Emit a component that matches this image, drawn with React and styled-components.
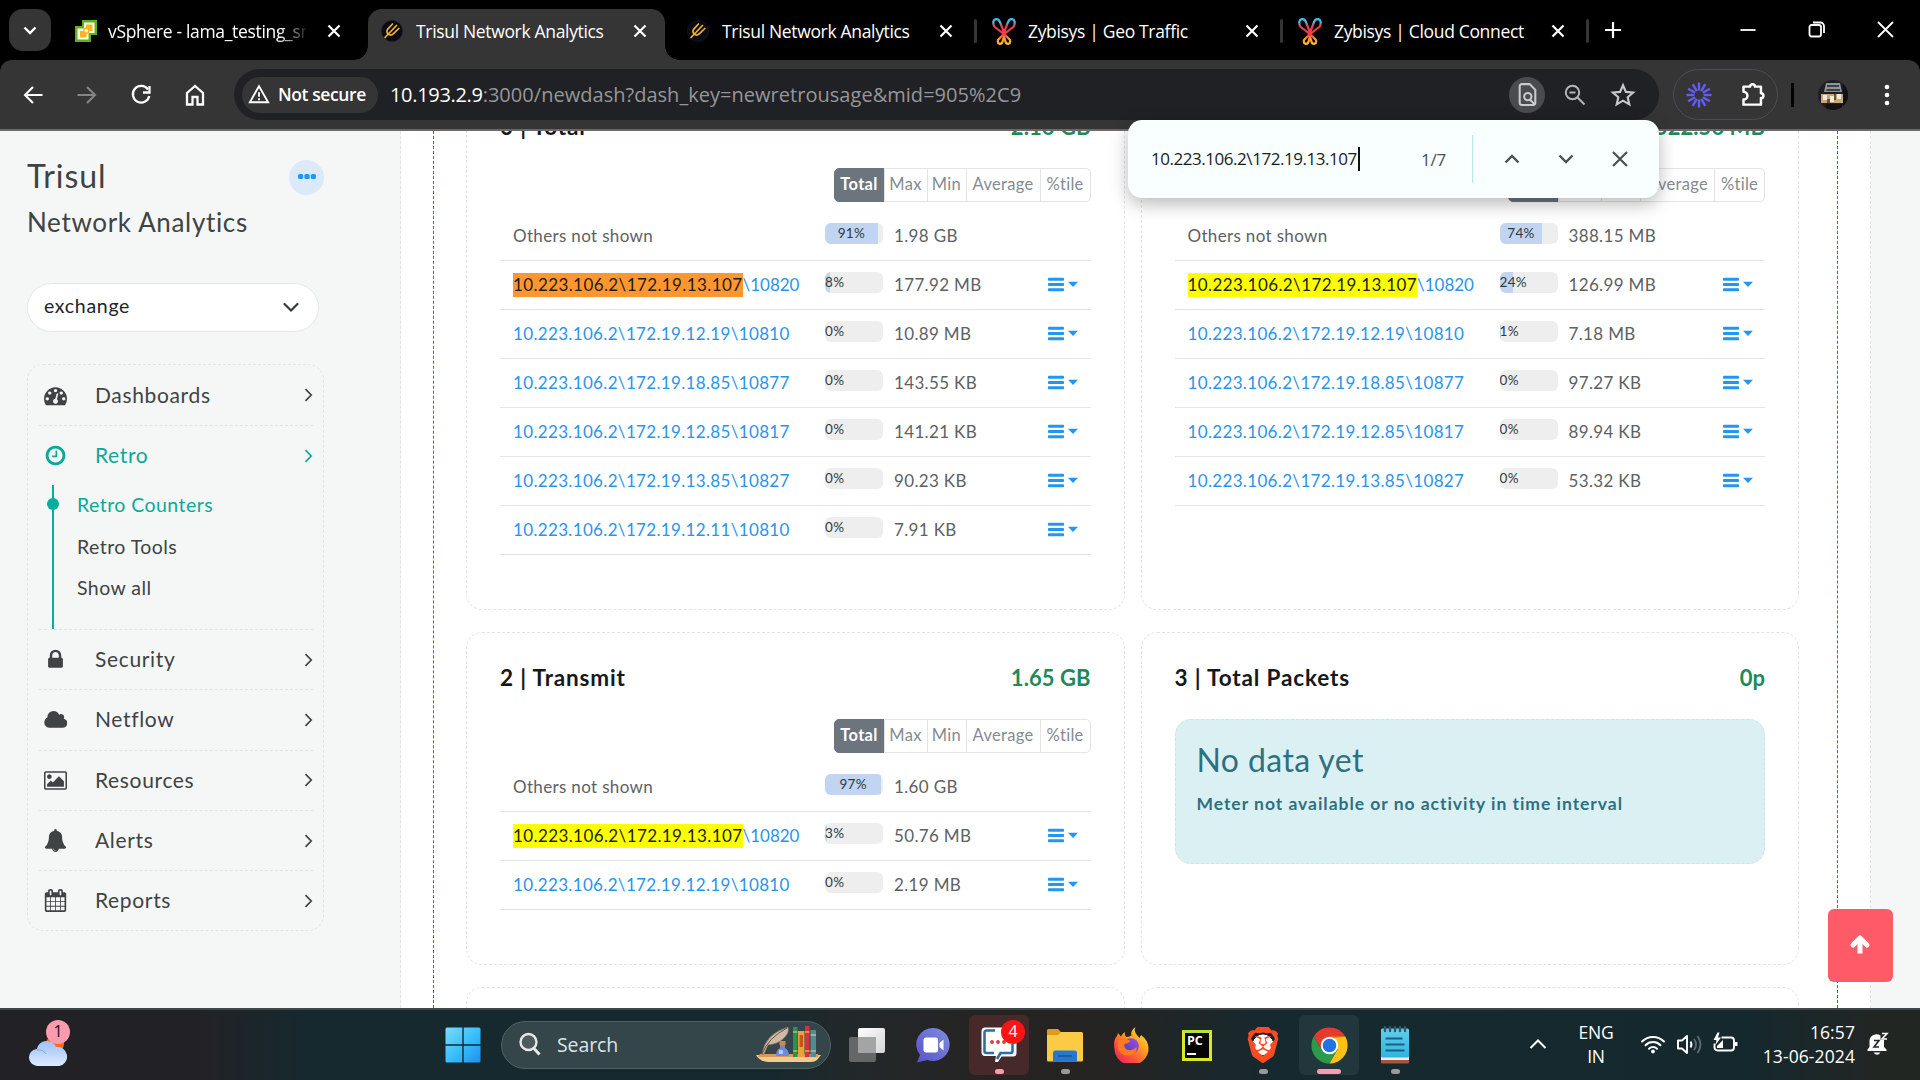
import React from "react";
import styled, { createGlobalStyle, css } from "styled-components";
import { SiBrave } from "react-icons/si";

const ui = `"Open Sans", "Noto Sans", sans-serif`;
const body = `Lato, "Open Sans", sans-serif`;

const Global = createGlobalStyle`
  * { box-sizing: border-box; }
  html, body { margin: 0; padding: 0; overflow: hidden; background: #fff; }
  svg { display: block; flex: none; }
`;

const Desktop = styled.div`
  position: relative;
  display: flex;
  flex-direction: column;
  width: 1920px;
  height: 1080px;
  overflow: hidden;
  font-family: ${body};
`;

/* ---------- browser chrome ---------- */
const TabStrip = styled.div`
  display: flex;
  align-items: flex-start;
  height: 60px;
  padding: 9px 0 0 9px;
  background: #000;
  font-family: ${ui};
`;
const TabSearch = styled.div`
  display: flex;
  align-items: center;
  justify-content: center;
  width: 42px;
  height: 42px;
  margin-right: 11px;
  border-radius: 14px;
  background: #353535;
`;
const TabCell = styled.div`
  display: flex;
  width: 306px;
  height: 51px;
`;
const TabBody = styled.div`
  position: relative;
  display: flex;
  align-items: center;
  width: 297px;
  height: 51px;
  padding: 0 17px 7px 12px;
  border-radius: 14px 14px 0 0;
  ${p => p.$active && css`
    background: #353535;
    &::before, &::after {
      content: "";
      position: absolute;
      bottom: 0;
      width: 14px;
      height: 14px;
    }
    &::before { left: -14px; background: radial-gradient(circle at 0 0, transparent 13.5px, #353535 14px); }
    &::after { right: -14px; background: radial-gradient(circle at 100% 0, transparent 13.5px, #353535 14px); }
  `}
`;
const TabTitle = styled.div`
  flex: 1;
  margin: 0 12px;
  overflow: hidden;
  white-space: nowrap;
  color: #fff;
  font-size: 17.5px;
  letter-spacing: -0.33px;
  line-height: 24px;
  ${p => p.$fade && css`
    margin-left: 10px;
    margin-right: 20px;
    mask-image: linear-gradient(90deg, #000 86%, transparent 102%);
  `}
`;
const TabRule = styled.div`
  width: 3px;
  height: 24px;
  margin: 10px 0 0 3px;
  border-radius: 2px;
  background: ${p => (p.$show ? "#353535" : "transparent")};
`;
const NewTab = styled.div`
  margin: 11px 0 0 11px;
`;
const WindowButtons = styled.div`
  display: flex;
  align-items: center;
  gap: 52px;
  margin: 12px 26px 0 auto;
`;

const ToolbarBack = styled.div`
  background: #000;
  height: 71px;
`;
const Toolbar = styled.div`
  display: flex;
  align-items: center;
  height: 71px;
  padding-left: 21px;
  border-bottom: 2px solid #6b696a;
  border-radius: 12px 12px 0 0;
  background: #353535;
  font-family: ${ui};
`;
const NavIcons = styled.div`
  display: flex;
  gap: 30px;
`;
const Omnibox = styled.div`
  display: flex;
  align-items: center;
  width: 1425px;
  height: 51px;
  margin-left: 27px;
  padding: 0 23px 0 8px;
  border-radius: 26px;
  background: #202124;
`;
const SecurityChip = styled.div`
  display: flex;
  align-items: center;
  gap: 8px;
  width: 136px;
  height: 36px;
  padding: 0 0 1px 6px;
  border-radius: 18px;
  background: #353535;
  color: #fff;
  font-size: 17.5px;
  font-weight: 600;
  letter-spacing: -0.4px;
  white-space: nowrap;
`;
const Url = styled.div`
  flex: 1;
  margin-left: 12px;
  color: #95979a;
  font-size: 20px;
  letter-spacing: 0.03px;
  white-space: nowrap;
  b { color: #fff; font-weight: 400; letter-spacing: -0.32px; }
`;
const OmniIcons = styled.div`
  display: flex;
  align-items: center;
  gap: 23px;
`;
const FindPageChip = styled.div`
  display: flex;
  align-items: center;
  justify-content: center;
  width: 36px;
  height: 36px;
  margin-right: -5px;
  border-radius: 50%;
  background: #4a4b4e;
`;
const ExtensionPill = styled.div`
  display: flex;
  align-items: center;
  justify-content: space-between;
  width: 105px;
  height: 51px;
  margin-left: 14px;
  padding: 0 11px 0 12px;
  border: 1px solid #4b4e52;
  border-radius: 26px;
`;
const ToolbarRule = styled.div`
  width: 3px;
  height: 24px;
  margin-left: 13px;
  background: #000;
`;
const Avatar = styled.div`
  margin-left: 24px;
`;
const KebabWrap = styled.div`
  margin-left: 36px;
`;

const FindBar = styled.div`
  position: absolute;
  z-index: 5;
  left: 1128px;
  top: 120px;
  display: flex;
  align-items: center;
  width: 531px;
  height: 78px;
  padding: 0 29px 0 23px;
  border-radius: 14px;
  background: #f8fffe;
  box-shadow: 0 6px 18px rgba(0, 0, 0, 0.28);
  font-family: ${ui};
`;
const FindInput = styled.div`
  padding-right: 1px;
  border-right: 2px solid #111;
  color: #1b1b1b;
  font-size: 17px;
  line-height: 24px;
  letter-spacing: -0.46px;
  white-space: nowrap;
`;
const FindCount = styled.div`
  margin-left: auto;
  color: #4a4f50;
  font-size: 17px;
  letter-spacing: -0.2px;
`;
const FindRule = styled.div`
  width: 1px;
  height: 48px;
  margin: 0 29px 0 26px;
  background: #b4e6ea;
`;
const FindButtons = styled.div`
  display: flex;
  gap: 34px;
`;

/* ---------- page ---------- */
const Page = styled.div`
  display: flex;
  height: 877px;
  overflow: hidden;
  background: #f5f7f6;
`;
const Sidebar = styled.aside`
  width: 401px;
  padding: 24px 0 0 27px;
  border-right: 1px dashed #e2e4e3;
  background: #f5f7f6;
  color: #404344;
`;
const BrandRow = styled.div`
  display: flex;
  align-items: center;
  justify-content: space-between;
  width: 297px;
  height: 40px;
  font-size: 32px;
  letter-spacing: 0.9px;
`;
const MoreButton = styled.div`
  display: flex;
  align-items: center;
  justify-content: center;
  width: 35px;
  height: 35px;
  margin-top: 5px;
  padding-bottom: 2px;
  border-radius: 50%;
  background: #dce9f8;
`;
const BrandSub = styled.div`
  margin-top: 9px;
  font-size: 26px;
  line-height: 36px;
  letter-spacing: 0.66px;
`;
const Select = styled.div`
  display: flex;
  align-items: center;
  justify-content: space-between;
  width: 292px;
  height: 49px;
  margin-top: 43px;
  padding: 0 19px 4px 16px;
  border: 1px solid #e4e6e5;
  border-radius: 25px;
  background: #fff;
  color: #212529;
  font-size: 19.5px;
  letter-spacing: 0.7px;
`;
const Menu = styled.nav`
  width: 297px;
  height: 567px;
  margin-top: 32px;
  padding: 0 10px 0 11px;
  border: 1px dashed #e2e4e3;
  border-radius: 16px;
`;
const Group = styled.div`
  border-bottom: ${p => (p.$last ? "0" : "1px dashed #e2e4e3")};
`;
const MenuItem = styled.div`
  display: flex;
  align-items: center;
  height: ${p => (p.$open ? 59 : p.$first ? 60 : 59.3)}px;
  padding-left: 5px;
  color: ${p => (p.$open ? "#09a99a" : "#404344")};
  font-size: 21px;
  letter-spacing: 0.65px;
`;
const MenuLabel = styled.span`
  flex: 1;
  margin-left: 28px;
  padding-bottom: 2px;
`;
const SubList = styled.div`
  height: 144px;
  margin-left: 13px;
  padding-left: 23px;
  border-left: 2px solid #05ad9d;
  font-size: 19.5px;
  letter-spacing: 0.45px;
`;
const SubItem = styled.div`
  position: relative;
  top: -1px;
  line-height: 41.5px;
  color: ${p => (p.$active ? "#09a99a" : "#404344")};
  ${p => p.$active && css`
    &::before {
      content: "";
      position: absolute;
      left: -30px;
      top: 14px;
      width: 12px;
      height: 12px;
      border-radius: 50%;
      background: #05ad9d;
    }
  `}
`;

const Main = styled.main`
  width: 1470px;
  padding: 0 32px;
  border-right: 1px dashed #e2e4e3;
  background: #fff;
`;
const DropZone = styled.div`
  display: flow-root;
  height: 877px;
  padding: 0 38px 0 32px;
  border-left: 1px dashed #1a6fe8;
  border-right: 1px dashed #1a6fe8;
`;
const Grid = styled.div`
  display: grid;
  grid-template-columns: 1fr 1fr;
  grid-template-rows: 529px 333px 200px;
  gap: 22px 16px;
  margin-top: -50px;
`;
const Card = styled.section`
  padding: 30px 33px 0;
  border: 1px dashed #e2e4e3;
  border-radius: 16px;
`;
const CardHead = styled.div`
  display: flex;
  justify-content: space-between;
  height: 30px;
  margin-bottom: 26px;
  color: #16191c;
  font-size: 22.5px;
  font-weight: 700;
  line-height: 30px;
  letter-spacing: 0.85px;
`;
const CardValue = styled.span`
  color: #1e8a59;
  font-size: 22px;
  letter-spacing: 0.05px;
`;
const Segments = styled.div`
  display: flex;
  width: max-content;
  height: 34px;
  margin: 0 0 10px auto;
`;
const Segment = styled.div`
  width: ${p => p.$w}px;
  margin-left: ${p => (p.$on ? 0 : -1)}px;
  border: 1px solid ${p => (p.$on ? "#6c757d" : "#e6e4e0")};
  background: ${p => (p.$on ? "#6c757d" : "transparent")};
  color: ${p => (p.$on ? "#fff" : "#858b90")};
  font-size: 16.5px;
  font-weight: ${p => (p.$on ? 700 : 400)};
  line-height: 31px;
  letter-spacing: 0.3px;
  text-align: center;
  white-space: nowrap;
  &:first-child { border-radius: 5px 0 0 5px; }
  &:last-child { border-radius: 0 5px 5px 0; }
`;
const Row = styled.div`
  display: grid;
  grid-template-columns: 312px 58px 165px 1fr;
  align-items: center;
  height: 49px;
  padding-left: 13px;
  border-bottom: 1px solid #e6e5e1;
  color: #5d6163;
  font-size: 17px;
  letter-spacing: 0.34px;
  white-space: nowrap;
`;
const Key = styled.span`
  padding-bottom: 1px;
  color: ${p => (p.$link ? "#2a94ea" : "inherit")};
  letter-spacing: ${p => (p.$marked ? 0 : 0.34)}px;
`;
const Hit = styled.mark`
  display: inline-block;
  height: 24px;
  line-height: 24px;
  background: ${p => (p.$current ? "#ff9632" : "#ffff00")};
  color: #1d1f10;
  letter-spacing: 0.4px;
`;
const Track = styled.div`
  height: 21px;
  margin-bottom: 5px;
  overflow: hidden;
  border-radius: 6px;
  background: #eeeeee;
`;
const Fill = styled.div`
  display: flex;
  justify-content: ${p => (p.$wide ? "center" : "flex-start")};
  height: 21px;
  background: #c1d4f1;
  color: #2f3a40;
  font-size: 13.5px;
  line-height: 20px;
  letter-spacing: 0.3px;
`;
const Amount = styled.span`
  padding: 0 0 1px 11px;
`;
const Alert = styled.div`
  height: 145px;
  padding: 21px 21px 0;
  border: 1px dashed #c9e6ea;
  border-radius: 16px;
  background: #dbf0f3;
  color: #2f7080;
`;
const AlertTitle = styled.div`
  font-size: 32px;
  line-height: 38px;
  letter-spacing: 0.4px;
`;
const AlertText = styled.div`
  margin-top: 13px;
  font-size: 17.5px;
  font-weight: 700;
  line-height: 24px;
  letter-spacing: 0.97px;
  white-space: nowrap;
`;
const ScrollTop = styled.div`
  position: absolute;
  left: 1828px;
  top: 909px;
  display: flex;
  align-items: center;
  justify-content: center;
  width: 65px;
  height: 73px;
  padding: 0 1px 2px 0;
  border-radius: 6px;
  background: #ff5a68;
`;

/* ---------- taskbar ---------- */
const Taskbar = styled.footer`
  display: flex;
  align-items: center;
  height: 72px;
  border-top: 2px solid #3f4748;
  background: linear-gradient(90deg, #222226 0, #222226 200px, #15292e 310px, #15292e 760px, #22282a 850px, #262322 1000px, #242423 1120px, #16292e 1270px, #15282d 1750px, #222623 1880px);
  color: #fff;
  font-family: ${ui};
`;
const Weather = styled.div`
  position: relative;
  width: 404px;
  margin-left: 29px;
`;
const Badge = styled.div`
  position: absolute;
  left: ${p => p.$x}px;
  top: ${p => p.$y}px;
  width: 24px;
  height: 24px;
  border-radius: 50%;
  background: ${p => p.$bg};
  color: ${p => p.$fg};
  font-size: 16px;
  line-height: 23px;
  text-align: center;
`;
const TileBar = styled.div`
  display: flex;
  gap: 6px;
`;
const Tile = styled.div`
  position: relative;
  display: flex;
  align-items: center;
  justify-content: center;
  width: 60px;
  height: 60px;
  border-radius: 6px;
  background: ${p => p.$bg || "transparent"};
  ${p => p.$mark && css`
    &::after {
      content: "";
      position: absolute;
      bottom: 1px;
      left: ${(60 - p.$markW) / 2}px;
      width: ${p.$markW}px;
      height: 5px;
      border-radius: 3px;
      background: ${p.$mark};
    }
  `}
`;
const SearchBox = styled.div`
  display: flex;
  align-items: center;
  width: 330px;
  height: 48px;
  margin: 0 6px 0 8px;
  padding: 0 8px 2px 16px;
  border: 1px solid #53605f;
  border-radius: 24px;
  background: #35464a;
  color: #dfe3e4;
  font-size: 19.5px;
  letter-spacing: -0.1px;
`;
const SearchText = styled.span`
  flex: 1;
  margin-left: 15px;
`;
const Tray = styled.div`
  display: flex;
  align-items: center;
  margin-left: auto;
  padding: 0 31px 2px 0;
  font-size: 17.5px;
  line-height: 24px;
`;
const Lang = styled.div`
  width: 38px;
  margin: 0 25px 0 30px;
  text-align: center;
  letter-spacing: -0.2px;
`;
const Status = styled.div`
  display: flex;
  align-items: center;
  gap: 10px;
`;
const Clock = styled.div`
  width: 95px;
  margin: 0 12px 0 22px;
  text-align: right;
  letter-spacing: 0.1px;
  white-space: nowrap;
`;

/* ---------- icons ---------- */
const Line = ({ s = 24, w = 2, c = "#fff", vb = 24, children, ...r }) => (
  <svg width={s} height={s} viewBox={`0 0 ${vb} ${vb}`} fill="none" stroke={c} strokeWidth={w} {...r}>{children}</svg>
);
const Cross = ({ s = 16, c = "#fff", w = 2.2 }) => (
  <Line s={s} vb={16} c={c} w={w}><path d="M2.5 2.5l11 11M13.5 2.5l-11 11" /></Line>
);
const VSphereIcon = () => (
  <svg width="24" height="24" viewBox="0 0 24 24">
    <path d="M8 1h15v15h-6v7H1V7h7z" fill="#5bb318" />
    <path d="M10 3.500h10.500v10.500h-6v6.500H3.500V9.500H10z" fill="#fff" />
    <path d="M12 5.500h6.500v6.500H12zM6 12h6.500v6.500H6z" fill="#f9b418" />
    <path d="M10 9.500h4.500v4.500H10z" fill="#fff" stroke="#f9b418" strokeWidth="1.500" />
  </svg>
);
const TrisulIcon = () => (
  <svg width="24" height="24" viewBox="0 0 24 24">
    <circle cx="12" cy="12" r="10.500" fill="#0a0a14" stroke="#1c1c2c" strokeWidth=".6" />
    <g fill="none" stroke="#f0b429" strokeWidth="1.700" strokeLinecap="round">
      <path d="M5 18.500L16.500 6.500" />
      <path d="M12.500 5L8 9.800q-2.200 3 .2 5.400 2.600 2 5.300-.6L18.800 9.500" />
    </g>
  </svg>
);
const ZybisysIcon = () => (
  <svg width="24" height="27" viewBox="0 0 24 27" fill="none" strokeWidth="2.200" strokeLinejoin="round">
    <defs>
      <linearGradient id="zy" x1="0" y1="1" x2="0" y2="26" gradientUnits="userSpaceOnUse">
        <stop offset="0" stopColor="#35c3ea" /><stop offset=".14" stopColor="#5ab4dc" />
        <stop offset=".26" stopColor="#ef3f4e" /><stop offset=".64" stopColor="#ef3f4e" />
        <stop offset=".76" stopColor="#f9981c" /><stop offset="1" stopColor="#fbc02d" />
      </linearGradient>
    </defs>
    <g stroke="url(#zy)">
      <path d="M13 17L2.200 8.500Q-.2 2 3.800 1.200 7.200 .8 8.500 5.500z" />
      <path d="M11 17L21.800 8.500Q24.200 2 20.200 1.200 16.800 .8 15.500 5.500z" />
      <path d="M13 14.500L6 22q-.8 3 1.500 3.800 2.500 .2 3-2z" />
      <path d="M11 14.500L18 22q.8 3-1.500 3.800-2.500 .2-3-2z" />
    </g>
  </svg>
);
const LoomIcon = () => (
  <svg width="26" height="26" viewBox="-13 -13 26 26" stroke="#625df5" strokeWidth="2.400">
    {Array.from({ length: 12 }, (_, i) => <path key={i} d="M0-4.500V-12.500" transform={`rotate(${i * 30})`} />)}
  </svg>
);
const AvatarIcon = () => (
  <svg width="30" height="30" viewBox="0 0 30 30">
    <clipPath id="av"><circle cx="15" cy="15" r="15" /></clipPath>
    <g clipPath="url(#av)">
      <path fill="#1d1f24" d="M0 0h30v30H0z" />
      <path fill="#8f9497" d="M8 3h14l2 9H6z" />
      <path fill="#3a4248" d="M9 5h12v2H9zM9 9h13v2H8z" />
      <path fill="#c9a57c" d="M3 14h22v9H3z" />
      <path fill="#efeadf" d="M5 15h4v5H5zM12 16h4v6h-4zM19 14h4v5h-4z" />
      <path fill="#6f4f35" d="M9 19h3v4H9zM16 14h2v6h-2z" />
      <path fill="#101114" d="M25 0h5v30h-5zM8 24h16v6H8z" />
    </g>
  </svg>
);

const glyphs = {
  gauge: ["0 0 1792 1792", "M384 1152q0-53-37.5-90.5t-90.5-37.5-90.5 37.5-37.5 90.5 37.5 90.5 90.5 37.5 90.5-37.5 37.5-90.5zm192-448q0-53-37.5-90.5t-90.5-37.5-90.5 37.5-37.5 90.5 37.5 90.5 90.5 37.5 90.5-37.5 37.5-90.5zm428 481l101-382q6-26-7.5-48.5t-38.5-29.5-48 6.5-30 39.5l-101 382q-60 5-107 43.5t-63 98.5q-20 77 20 146t117 89 146-20 89-117q16-60-6-117t-72-91zm660-33q0-53-37.5-90.5t-90.5-37.5-90.5 37.5-37.5 90.5 37.5 90.5 90.5 37.5 90.5-37.5 37.5-90.5zm-640-640q0-53-37.5-90.5t-90.5-37.5-90.5 37.5-37.5 90.5 37.5 90.5 90.5 37.5 90.5-37.5 37.5-90.5zm448 192q0-53-37.5-90.5t-90.5-37.5-90.5 37.5-37.5 90.5 37.5 90.5 90.5 37.5 90.5-37.5 37.5-90.5zm320 448q0 261-141 483-19 29-54 29h-1402q-35 0-54-29-141-221-141-483 0-182 71-348t191-286 286-191 348-71 348 71 286 191 191 286 71 348z"],
  clock: ["0 0 1792 1792", "M1024 544v448q0 14-9 23t-23 9h-320q-14 0-23-9t-9-23v-64q0-14 9-23t23-9h224v-352q0-14 9-23t23-9h64q14 0 23 9t9 23zm416 352q0-148-73-273t-198-198-273-73-273 73-198 198-73 273 73 273 198 198 273 73 273-73 198-198 73-273zm224 0q0 209-103 385.5t-279.5 279.5-385.5 103-385.5-103-279.5-279.5-103-385.5 103-385.5 279.5-279.5 385.5-103 385.5 103 279.5 279.5 103 385.5z"],
  lock: ["0 0 1792 1792", "M640 768h512v-192q0-106-75-181t-181-75-181 75-75 181v192zm832 96v576q0 40-28 68t-68 28h-960q-40 0-68-28t-28-68v-576q0-40 28-68t68-28h32v-192q0-184 132-316t316-132 316 132 132 316v192h32q40 0 68 28t28 68z"],
  cloud: ["40 0 1920 1680", "M1984 1152q0 159-112.5 271.5t-271.5 112.5h-1088q-185 0-316.500-131.500t-131.500-316.500q0-132 71-241.500t187-163.500q-2-28-2-43 0-212 150-362t362-150q158 0 286.500 88t187.500 230q70-62 166-62 106 0 181 75t75 181q0 75-41 138 129 30 213 134.500t84 239.500z"],
  image: ["-64 0 1920 1792", "M576 576q0 80-56 136t-136 56-136-56-56-136 56-136 136-56 136 56 56 136zm1024 384v448h-1408v-192l320-320 160 160 512-512zm96-704h-1600q-13 0-22.500 9.500t-9.500 22.500v1216q0 13 9.500 22.500t22.500 9.500h1600q13 0 22.500-9.500t9.500-22.500v-1216q0-13-9.500-22.500t-22.500-9.500zm160 32v1216q0 66-47 113t-113 47h-1600q-66 0-113-47t-47-113v-1216q0-66 47-113t113-47h1600q66 0 113 47t47 113z"],
  bell: ["0 0 1792 1792", "M912 1696q0-16-16-16-59 0-101.500-42.500t-42.500-101.500q0-16-16-16t-16 16q0 73 51.500 124.500t124.500 51.500q16 0 16-16zm816-288q0 52-38 90t-90 38h-448q0 106-75 181t-181 75-181-75-75-181h-448q-52 0-90-38t-38-90q50-42 91-88t85-119.500 74.500-158.500 50-206 19.500-260q0-152 117-282.500t307-158.500q-8-19-8-39 0-40 28-68t68-28 68 28 28 68q0 20-8 39 190 28 307 158.500t117 282.500q0 139 19.500 260t50 206 74.500 158.500 85 119.500 91 88z"],
  calendar: ["0 0 1792 1792", "M192 1664h288v-288h-288v288zm352 0h320v-288h-320v288zm-352-352h288v-320h-288v320zm352 0h320v-320h-320v320zm-352-384h288v-288h-288v288zm736 736h320v-288h-320v288zm-384-736h320v-288h-320v288zm768 736h288v-288h-288v288zm-384-352h320v-320h-320v320zm-352-864v-288q0-13-9.500-22.500t-22.500-9.500h-64q-13 0-22.500 9.500t-9.500 22.500v288q0 13 9.500 22.500t22.500 9.500h64q13 0 22.500-9.500t9.500-22.500zm736 864h288v-320h-288v320zm-384-384h320v-288h-320v288zm384 0h288v-288h-288v288zm32-480v-288q0-13-9.500-22.500t-22.500-9.500h-64q-13 0-22.500 9.500t-9.500 22.500v288q0 13 9.500 22.500t22.500 9.500h64q13 0 22.500-9.500t9.500-22.500zm384-64v1280q0 52-38 90t-90 38h-1408q-52 0-90-38t-38-90v-1280q0-52 38-90t90-38h128v-96q0-66 47-113t113-47h64q66 0 113 47t47 113v96h384v-96q0-66 47-113t113-47h64q66 0 113 47t47 113v96h128q52 0 90 38t38 90z"],
};
const Glyph = ({ name }) => (
  <svg width="23" height="23" viewBox={glyphs[name][0]} fill="currentColor"><path d={glyphs[name][1]} /></svg>
);
const Chevron = () => (
  <svg width="9" height="14" viewBox="0 0 9 14" fill="none" stroke="currentColor" strokeWidth="1.700"><path d="M1.500 1.200L7.200 7l-5.700 5.800" /></svg>
);
const RowMenu = () => (
  <svg width="30" height="18" viewBox="0 0 30 18" fill="#2196f3">
    <rect x="0" y="1.800" width="16" height="3" rx=".8" /><rect x="0" y="7" width="16" height="3" rx=".8" /><rect x="0" y="12.200" width="16" height="3" rx=".8" />
    <path d="M20 5.800h10l-5 5.200z" />
  </svg>
);

const WeatherIcon = () => (
  <svg width="38" height="44" viewBox="0 0 38 44">
    <defs><linearGradient id="wc" x1="0" y1="0" x2="0" y2="1"><stop offset="0" stopColor="#9cc0f5" /><stop offset="1" stopColor="#dcecff" /></linearGradient></defs>
    <circle cx="26" cy="21" r="9" fill="#ff6a1a" />
    <path d="M9 43a8.500 8.500 0 0 1-1-17 10 10 0 0 1 19-2 9.600 9.600 0 0 1 3 19z" fill="url(#wc)" />
    <path d="M8 27q6-1 9 4" stroke="#7ba6e6" fill="none" />
  </svg>
);
const WindowsLogo = () => (
  <svg width="36" height="36" viewBox="0 0 36 36">
    <defs><linearGradient id="win" x1="0" y1="0" x2="1" y2="1"><stop offset="0" stopColor="#7bdcfb" /><stop offset=".55" stopColor="#35bdfb" /><stop offset="1" stopColor="#1f8fec" /></linearGradient></defs>
    <path fill="url(#win)" d="M2 .5h15.300v16.800H.5V2A1.500 1.500 0 0 1 2 .5zM18.700.5H34A1.500 1.500 0 0 1 35.500 2v15.300H18.700zM.5 18.700h16.800v16.800H2A1.500 1.500 0 0 1 .5 34zM18.700 18.700h16.800V34a1.500 1.500 0 0 1-1.500 1.500H18.700z" />
  </svg>
);
const BooksIcon = () => (
  <svg width="66" height="36" viewBox="0 0 66 36">
    <path d="M0 29h65l-4 5q-2 2-6 2H12Q3 35 0 29z" fill="#f3c98c" /><path d="M4 28h58v3H2z" fill="#d99a55" />
    <path d="M6 28Q9 8 32 1q2 6-5 12-5 5-15 6L8 28z" fill="#cdb9a4" stroke="#7d6a5b" strokeWidth=".7" /><path d="M6 28Q12 12 31 2" fill="none" stroke="#6b5546" />
    <path d="M24 18h5v4q4 2 4 8H20q0-6 4-8z" fill="#6f88d8" /><path d="M23.500 15h6v4h-6z" fill="#c98a4b" /><path d="M23 24h4v4h-4z" fill="#b6c6f6" />
    <path d="M37 1h4.500v30H37z" fill="#2f8f4e" /><path d="M42 5h6.500v26H42z" fill="#eba13c" /><path d="M43.500 9h3.500v12h-3.500z" fill="#c7531f" /><path d="M49 0h4.500v31H49z" fill="#d9303a" /><path d="M54.500 4h5.500v27h-5.500z" fill="#4f8d91" />
    <path d="M37 6h4.500M37 25h4.500M49 6h4.500M49 25h4.500M54.500 9h5.500M54.500 25h5.500" stroke="#f4d58a" strokeWidth="1.200" />
  </svg>
);
const TaskViewIcon = () => (
  <svg width="36" height="34" viewBox="0 0 36 34">
    <defs><linearGradient id="tv" x1="0" y1="0" x2="1" y2="1"><stop offset="0" stopColor="#fff" /><stop offset="1" stopColor="#d5d5d5" /></linearGradient></defs>
    <rect x="9" y="0" width="27" height="25" rx="2" fill="url(#tv)" /><rect x="0" y="9" width="27" height="25" rx="2" fill="#6d6e6e" opacity=".9" />
    <path d="M9 9h18v16H9z" fill="#a3a4a4" />
  </svg>
);
const ChatIcon = () => (
  <svg width="34" height="36" viewBox="0 0 34 36">
    <defs><linearGradient id="ch" x1="1" y1="0" x2="0" y2="1"><stop offset="0" stopColor="#7d8fe0" /><stop offset="1" stopColor="#5a50c8" /></linearGradient></defs>
    <path d="M17.500 1a16.500 16.500 0 1 1-6 32L1 35.500l3-7.500A16.500 16.500 0 0 1 17.500 1z" fill="url(#ch)" />
    <rect x="7.500" y="10.500" width="14.500" height="15" rx="2.500" fill="#fff" /><path d="M23.500 16l4-3.500v11l-4-3.500z" fill="#fff" />
  </svg>
);
const MessengerIcon = () => (
  <svg width="36" height="36" viewBox="0 0 36 36">
    <path d="M4 .5h28A3.500 3.500 0 0 1 35.500 4v22a3.500 3.500 0 0 1-3.500 3.500H20.500L17 35h-3l1-6H4A3.500 3.500 0 0 1 .5 26V4A3.500 3.500 0 0 1 4 .5z" fill="#fff" />
    <path d="M14 3.500H5.500a2 2 0 0 0-2 2V24a2 2 0 0 0 2 2H13M31.500 17v7a2 2 0 0 1-2 2h-10l-3.500 6" fill="none" stroke="#2e6da8" strokeWidth="2.600" />
    <circle cx="11" cy="15" r="1.900" fill="#e2333d" /><circle cx="17" cy="15" r="1.900" fill="#e2333d" /><circle cx="23" cy="15" r="1.900" fill="#e2333d" />
  </svg>
);
const ExplorerIcon = () => (
  <svg width="36" height="34" viewBox="0 0 36 34">
    <path d="M1.500 1H11l3 3h20v8H0V2.500A1.500 1.500 0 0 1 1.500 1z" fill="#dc9d1f" />
    <path d="M0 7h11l3-3h20.500A1.500 1.500 0 0 1 36 5.500V32a1.500 1.500 0 0 1-1.500 1.500h-33A1.500 1.500 0 0 1 0 32z" fill="#fbcb45" />
    <path d="M6 33.500V25a2.500 2.500 0 0 1 2.500-2.500h19A2.500 2.500 0 0 1 30 25v8.500z" fill="#2678cf" /><path d="M11 28h14" stroke="#1a5596" strokeWidth="1.600" />
  </svg>
);
const FirefoxIcon = () => (
  <svg width="36" height="36" viewBox="0 0 36 36">
    <defs>
      <linearGradient id="ff" x1="1" y1="0" x2=".2" y2="1"><stop offset="0" stopColor="#fff04f" /><stop offset=".4" stopColor="#ffa51e" /><stop offset=".75" stopColor="#ff4f3c" /><stop offset="1" stopColor="#e5245f" /></linearGradient>
      <linearGradient id="fp" x1="1" y1="0" x2="0" y2="1"><stop offset="0" stopColor="#a14de8" /><stop offset="1" stopColor="#4a3fb0" /></linearGradient>
    </defs>
    <path d="M22.500 0q-2 4 1 7.500 2 2 3 3.500l1.500-3q8 6 7.500 14A17 16 0 0 1 1.500 22Q0 13 4 9l1-3 3 3.500Q9.500 6 12 5q-.5 4 1.500 5 3-.5 5-1.500Q17 4 22.500 0z" fill="url(#ff)" />
    <circle cx="18" cy="19" r="7.800" fill="url(#fp)" />
    <path d="M5 15q3-5 7-3.500l5 2q-.5 2.500-4 3-2.500 .8-1.500 3.500 2 3.500 6 3.200 4-.5 6-3.500 1 6.500-6 8.300-9 1.500-12-5.500Q4 19 5 15z" fill="#ff7a22" />
  </svg>
);
const PyCharmMark = styled.div`
  display: flex;
  flex-direction: column;
  justify-content: space-between;
  width: 30px;
  height: 31px;
  padding: 0 0 3px 2px;
  border: 3.5px solid #d9ea22;
  border-top-color: #b6e23a;
  background: #050505;
  color: #fff;
  font: 700 12.5px/15px ${ui};
  &::after { content: ""; width: 9px; height: 2px; background: #fff; }
`;
const BraveMark = styled.div`
  display: flex;
  align-items: center;
  justify-content: center;
  width: 36px;
  height: 37px;
  color: #fb4b22;
  background: radial-gradient(circle at 50% 48%, #fff 10px, transparent 10.500px);
`;
const ChromeIcon = () => (
  <svg width="37" height="37" viewBox="-18.500 -18.500 37 37">
    <path d="M0 0L-15.700-9A18.100 18.100 0 0 1 15.700-9z" fill="#e33b2e" />
    <path d="M-15.700-9A18.100 18.100 0 0 0 0 18.100L8 4-8 4z" fill="#2a9b4b" />
    <path d="M15.700-9A18.100 18.100 0 0 1 0 18.100L8 4 0-9z" fill="#fbc116" />
    <path d="M-15.700-9L-7.500 4.500-4-7 15.700-9z" fill="#e33b2e" />
    <circle r="8.700" fill="#fff" /><circle r="6.800" fill="#1f73e8" />
  </svg>
);
const NotepadIcon = () => (
  <svg width="30" height="38" viewBox="0 0 30 38">
    <defs><linearGradient id="np" x1="0" y1="0" x2="0" y2="1"><stop offset="0" stopColor="#62d0ee" /><stop offset="1" stopColor="#2fb4de" /></linearGradient></defs>
    <rect x="1" y="32" width="28" height="5.500" rx="1" fill="#a4553a" /><rect x="1" y="29" width="28" height="5" fill="#ececec" />
    <rect x="1" y="2.500" width="28" height="29" rx="1.500" fill="url(#np)" />
    <path d="M5.500 12.500h17M5.500 18.500h19M5.500 24.500h19" stroke="#1c5f83" strokeWidth="1.800" />
    <path d="M5 1v4M10 1v4M15 1v4M20 1v4M25 1v4" stroke="#2c5b6e" strokeWidth="2.400" strokeLinecap="round" />
  </svg>
);

/* ---------- data ---------- */
const TERM = "10.223.106.2\\172.19.13.107";
const tabs = [
  { t: "vSphere - lama_testing_snmp", I: VSphereIcon, fade: true },
  { t: "Trisul Network Analytics", I: TrisulIcon, active: true },
  { t: "Trisul Network Analytics", I: TrisulIcon, rule: true },
  { t: "Zybisys | Geo Traffic", I: ZybisysIcon, rule: true },
  { t: "Zybisys | Cloud Connect", I: ZybisysIcon, rule: true },
];
const totalRows = [
  ["Others not shown", 91, "1.98 GB"],
  [TERM + "\\10820", 8, "177.92 MB"],
  ["10.223.106.2\\172.19.12.19\\10810", 0, "10.89 MB"],
  ["10.223.106.2\\172.19.18.85\\10877", 0, "143.55 KB"],
  ["10.223.106.2\\172.19.12.85\\10817", 0, "141.21 KB"],
  ["10.223.106.2\\172.19.13.85\\10827", 0, "90.23 KB"],
  ["10.223.106.2\\172.19.12.11\\10810", 0, "7.91 KB"],
];
const receiveRows = [
  ["Others not shown", 74, "388.15 MB"],
  [TERM + "\\10820", 24, "126.99 MB"],
  ["10.223.106.2\\172.19.12.19\\10810", 1, "7.18 MB"],
  ["10.223.106.2\\172.19.18.85\\10877", 0, "97.27 KB"],
  ["10.223.106.2\\172.19.12.85\\10817", 0, "89.94 KB"],
  ["10.223.106.2\\172.19.13.85\\10827", 0, "53.32 KB"],
];
const transmitRows = [
  ["Others not shown", 97, "1.60 GB"],
  [TERM + "\\10820", 3, "50.76 MB"],
  ["10.223.106.2\\172.19.12.19\\10810", 0, "2.19 MB"],
];
const segments = [["Total", 51], ["Max", 44], ["Min", 40], ["Average", 75], ["%tile", 51]];
const lowerMenu = [["Security", "lock"], ["Netflow", "cloud"], ["Resources", "image"], ["Alerts", "bell"], ["Reports", "calendar"]];

function Meter({ title, value, rows, current }) {
  return (
    <Card>
      <CardHead><span>{title}</span><CardValue>{value}</CardValue></CardHead>
      <Segments>
        {segments.map(([s, w], i) => <Segment key={s} $w={w} $on={i === 0}>{s}</Segment>)}
      </Segments>
      {rows.map(([key, pct, amount], i) => {
        const marked = key.startsWith(TERM);
        return (
          <Row key={key}>
            <Key $link={i > 0} $marked={marked}>
              {marked ? <><Hit $current={current}>{TERM}</Hit>{key.slice(TERM.length)}</> : key}
            </Key>
            <Track><Fill $wide={pct > 50} style={{ width: `${pct}%` }}>{pct}%</Fill></Track>
            <Amount>{amount}</Amount>
            {i > 0 && <RowMenu />}
          </Row>
        );
      })}
    </Card>
  );
}

function Item({ label, icon, open, first }) {
  return (
    <MenuItem $open={open} $first={first}><Glyph name={icon} /><MenuLabel>{label}</MenuLabel><Chevron /></MenuItem>
  );
}

export default function App() {
  return (
    <Desktop>
      <Global />
      <TabStrip>
        <TabSearch><Line s={16} vb={16} w={2.4}><path d="M2.500 5.500L8 11l5.500-5.500" /></Line></TabSearch>
        {tabs.map(({ t, I, active, rule, fade }, i) => (
          <TabCell key={i}>
            <TabBody $active={active}><I /><TabTitle $fade={fade}>{t}</TabTitle><Cross /></TabBody>
            <TabRule $show={rule} />
          </TabCell>
        ))}
        <NewTab><Line s={20} vb={20} w={2.2}><path d="M10 2v16M2 10h16" /></Line></NewTab>
        <WindowButtons>
          <Line s={16} vb={16} w={1.8}><path d="M.5 8h15" /></Line>
          <Line s={17} vb={17} w={1.8}>
            <rect x="1.500" y="4" width="11.500" height="11.500" rx="2" /><path d="M5 1.500h7.500a3.500 3.500 0 0 1 3.500 3.500v7" />
          </Line>
          <Line s={17} vb={17} w={1.8}><path d="M1 1l15 15M16 1L1 16" /></Line>
        </WindowButtons>
      </TabStrip>

      <ToolbarBack>
        <Toolbar>
          <NavIcons>
            <Line w={2.1}><path d="M21.500 12H4M12 4l-8 8 8 8" /></Line>
            <Line w={2.1} c="#858585"><path d="M2.500 12H20M12 4l8 8-8 8" /></Line>
            <Line w={2.300}><path d="M19 6.500A8.300 8.300 0 1 0 20.300 13" /><path d="M20.500 3v6.500H14" /></Line>
            <Line w={2.300}><path d="M4 10l8-7 8 7v11.500h-5.500V14h-5v7.500H4z" /></Line>
          </NavIcons>
          <Omnibox>
            <SecurityChip>
              <Line s={22} w={2}><path d="M12 3.500L22 21H2z" /><path d="M12 10v5M12 16.700v2" /></Line>
              Not secure
            </SecurityChip>
            <Url><b>10.193.2.9</b>:3000/newdash?dash_key=newretrousage&amp;mid=905%2C9</Url>
            <OmniIcons>
              <FindPageChip>
                <Line s={25} w={2} c="#c9cacc"><path d="M14 2H6.500A2 2 0 0 0 4.500 4v16a2 2 0 0 0 2 2h11a2 2 0 0 0 2-2V7.500zM19 21.500L14.500 17" /><circle cx="12.300" cy="14" r="3.500" /></Line>
              </FindPageChip>
              <Line s={24} w={2} c="#b4b6b9"><circle cx="9.500" cy="9.500" r="6.700" /><path d="M14.500 14.500l7 7M6.500 9.500h6" /></Line>
              <Line s={26} w={2} c="#c6c8ca"><path d="M12 3l2.700 6.100 6.600.6-5 4.400 1.500 6.500-5.800-3.400-5.800 3.400 1.500-6.500-5-4.400 6.600-.6z" /></Line>
            </OmniIcons>
          </Omnibox>
          <ExtensionPill>
            <LoomIcon />
            <Line s={27} w={2.200}><path d="M4 5h5.800a2.200 2.200 0 0 1 4.400 0H19.500v5.800a2.200 2.200 0 0 1 0 4.400V21H4v-4.500a3.500 3.500 0 0 0 0-7z" strokeLinejoin="round" /></Line>
          </ExtensionPill>
          <ToolbarRule />
          <Avatar><AvatarIcon /></Avatar>
          <KebabWrap>
            <svg width="6" height="24" fill="#fff"><circle cx="3" cy="4" r="2.300" /><circle cx="3" cy="12" r="2.300" /><circle cx="3" cy="20" r="2.300" /></svg>
          </KebabWrap>
        </Toolbar>
      </ToolbarBack>

      <Page>
        <Sidebar>
          <BrandRow>
            Trisul
            <MoreButton>
              <svg width="18" height="6" fill="#2196f3"><rect width="5.200" height="5" rx="1.500" /><rect x="6.400" width="5.200" height="5" rx="1.500" /><rect x="12.800" width="5.200" height="5" rx="1.500" /></svg>
            </MoreButton>
          </BrandRow>
          <BrandSub>Network Analytics</BrandSub>
          <Select>
            exchange
            <svg width="16" height="8" viewBox="0 0 16 8" overflow="visible" fill="none" stroke="#343a40" strokeWidth="2.200" strokeLinecap="round"><path d="M1.500 2L8 8.500 14.500 2" /></svg>
          </Select>
          <Menu>
            <Group><Item label="Dashboards" icon="gauge" first /></Group>
            <Group>
              <Item label="Retro" icon="clock" open />
              <SubList>
                <SubItem $active>Retro Counters</SubItem>
                <SubItem>Retro Tools</SubItem>
                <SubItem>Show all</SubItem>
              </SubList>
            </Group>
            {lowerMenu.map(([label, icon], i) => (
              <Group key={label} $last={i === 4}><Item label={label} icon={icon} /></Group>
            ))}
          </Menu>
        </Sidebar>
        <Main>
          <DropZone>
            <Grid>
              <Meter title="0 | Total" value="2.16 GB" rows={totalRows} current />
              <Meter title="1 | Receive" value="522.56 MB" rows={receiveRows} />
              <Meter title="2 | Transmit" value="1.65 GB" rows={transmitRows} />
              <Card>
                <CardHead><span>3 | Total Packets</span><CardValue>0p</CardValue></CardHead>
                <Alert>
                  <AlertTitle>No data yet</AlertTitle>
                  <AlertText>Meter not available or no activity in time interval</AlertText>
                </Alert>
              </Card>
              <Card />
              <Card />
            </Grid>
          </DropZone>
        </Main>
      </Page>

      <FindBar>
        <FindInput>{TERM}</FindInput>
        <FindCount>1/7</FindCount>
        <FindRule />
        <FindButtons>
          <Line s={20} vb={20} w={2.4} c="#4b4f50"><path d="M3.500 13.500L10 7l6.500 6.500" /></Line>
          <Line s={20} vb={20} w={2.4} c="#4b4f50"><path d="M3.500 6.500L10 13l6.500-6.500" /></Line>
          <Line s={20} vb={20} w={2.2} c="#4b4f50"><path d="M3 3l14 14M17 3L3 17" /></Line>
        </FindButtons>
      </FindBar>
      <ScrollTop>
        <Line s={24} w={5} strokeLinecap="round" strokeLinejoin="round"><path d="M5 12l7-7 7 7" /><path d="M12 6v14.500" strokeLinecap="butt" /></Line>
      </ScrollTop>

      <Taskbar>
        <Weather><WeatherIcon /><Badge $x={17} $y={-3} $bg="#fb9bb0" $fg="#111">1</Badge></Weather>
        <Tile><WindowsLogo /></Tile>
        <SearchBox>
          <Line s={24} w={2.400} c="#e6e9ea"><circle cx="10.500" cy="10" r="8" fill="#4b5b5f" /><path d="M16 16.500l5.500 6" strokeWidth="3" /></Line>
          <SearchText>Search</SearchText>
          <BooksIcon />
        </SearchBox>
        <TileBar>
          <Tile><TaskViewIcon /></Tile>
          <Tile><ChatIcon /></Tile>
          <Tile $bg="#47292a" $mark="#fb9bb0" $markW={9}><MessengerIcon /><Badge $x={32} $y={5} $bg="#fb1414" $fg="#fff">4</Badge></Tile>
          <Tile $mark="#9a9a9a" $markW={9}><ExplorerIcon /></Tile>
          <Tile><FirefoxIcon /></Tile>
          <Tile><PyCharmMark>PC</PyCharmMark></Tile>
          <Tile $mark="#9a9a9a" $markW={9}><BraveMark><SiBrave size={36} /></BraveMark></Tile>
          <Tile $bg="#22373c" $mark="#fb9bb0" $markW={24}><ChromeIcon /></Tile>
          <Tile $mark="#9a9a9a" $markW={9}><NotepadIcon /></Tile>
        </TileBar>
        <Tray>
          <Line s={18} vb={18} w={2}><path d="M1.500 13L9 5.500 16.500 13" /></Line>
          <Lang>ENG<br />IN</Lang>
          <Status>
            <Line s={26} vb={26} w={2} strokeLinecap="round">
              <path d="M2 10.500a15.500 15.500 0 0 1 22 0M5.500 14.200a10.600 10.600 0 0 1 15 0M9 17.700a5.700 5.700 0 0 1 8 0" /><circle cx="13" cy="20.500" r="1.300" fill="#fff" strokeWidth="1.200" />
            </Line>
            <Line s={26} vb={26} w={1.900} strokeLinejoin="round">
              <path d="M2 9.500h4l5-4.500v17l-5-4.500H2z" /><path d="M14.500 10.500q2 3 0 6" /><path d="M18 8q4 5.500 0 11M21.500 5q6 8.500 0 17" stroke="#5d696c" />
            </Line>
            <Line s={26} vb={26} w={1.900}>
              <path d="M9.500 6.500H19a3 3 0 0 1 3 3v7a3 3 0 0 1-3 3H5.500a3 3 0 0 1-3-3v-4" /><path d="M24 11v4" strokeWidth="3" />
              <path d="M5.500 1.500L1.500 9h3l-1 5 5.500-7.500H6l1.500-5z" fill="#fff" stroke="none" /><path d="M5 15l6-6v8H5z" fill="#fff" stroke="none" />
            </Line>
          </Status>
          <Clock>16:57<br />13-06-2024</Clock>
          <svg width="22" height="24" viewBox="0 0 22 24">
            <path d="M2.500 15V9a7 7 0 0 1 11-5.500V8H17v7l2.500 2.500V19H.5v-1.500z" fill="#fff" /><path d="M6.500 20.500h7q-3.500 4.500-7 0z" fill="#fff" />
            <path d="M7 8.500h5l-5 6.500h5" fill="none" stroke="#1b2826" strokeWidth="1.600" /><path d="M15 1.500h5l-5 5.500h5" fill="none" stroke="#fff" strokeWidth="1.600" />
          </svg>
        </Tray>
      </Taskbar>
    </Desktop>
  );
}
